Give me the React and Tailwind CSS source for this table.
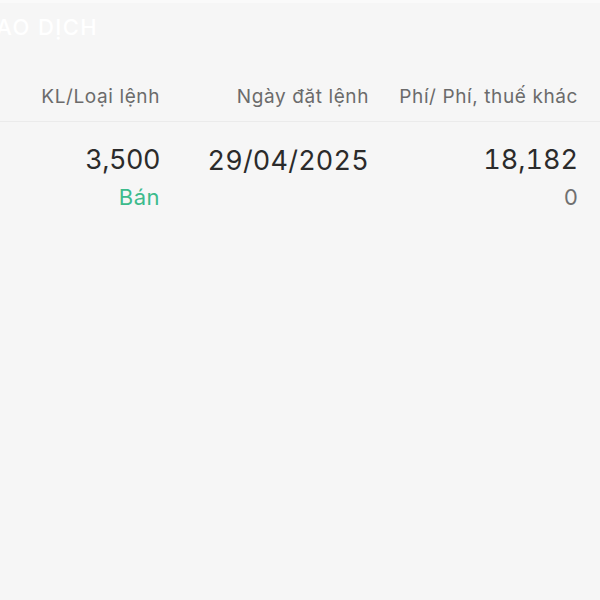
const font = { fontFamily: 'Inter, "Noto Sans", sans-serif' };

function HeaderCell({ children, className = "" }) {
  return (
    <div className={`shrink-0 text-right text-[19px] leading-[24px] tracking-[0.6px] text-[#6b6b6b] ${className}`}>
      {children}
    </div>
  );
}

export default function App() {
  return (
    <main className="h-[600px] w-[600px] overflow-hidden bg-[#f6f6f6]" style={font}>
      <div className="h-[3px] bg-[#fafafa]" />
      <div className="pt-[9px]">
        <h1 className="-ml-[29px] whitespace-nowrap text-[22px] font-medium leading-[30px] tracking-[1.4px] text-white">
          GIAO DỊCH
        </h1>
      </div>

      <div className="mt-[43px] flex justify-end border-b border-[#ebebeb] pb-[12px] pr-[22px]">
        <HeaderCell className="w-[160px]">KL/Loại lệnh</HeaderCell>
        <HeaderCell className="w-[209px]">Ngày đặt lệnh</HeaderCell>
        <HeaderCell className="w-[209px]">Phí/ Phí, thuế khác</HeaderCell>
      </div>

      <div className="flex justify-end pr-[22px] pt-[19px] tabular-nums">
        <div className="w-[160px] shrink-0 text-right">
          <p className="text-[27px] leading-[38px] tracking-[-0.5px] text-[#2b2b2b]">3,500</p>
          <p className="mt-[2px] text-[22px] leading-[32px] tracking-[0.5px] text-[#3cbb8c]">Bán</p>
        </div>
        <div className="w-[209px] shrink-0 text-right">
          <p className="text-[27px] leading-[40px] tracking-[0.2px] text-[#2b2b2b]">29/04/2025</p>
        </div>
        <div className="w-[209px] shrink-0 text-right">
          <p className="text-[27px] leading-[38px] text-[#2b2b2b]">18,182</p>
          <p className="mt-[2px] text-[22px] leading-[32px] text-[#707070]">0</p>
        </div>
      </div>
    </main>
  );
}
